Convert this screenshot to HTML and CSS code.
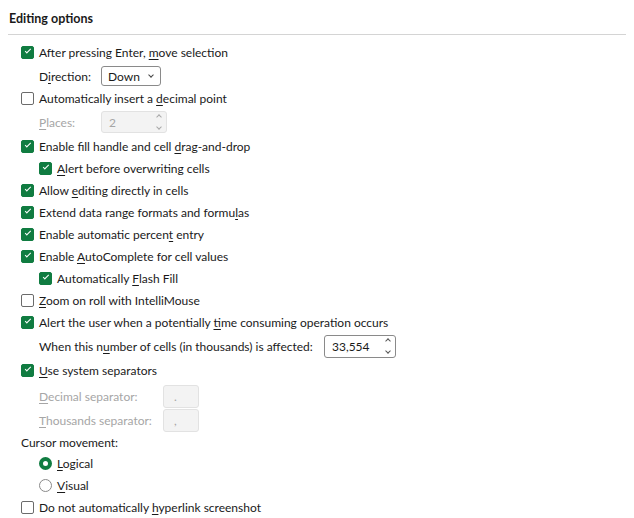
FILE: index.html
```html
<!DOCTYPE html>
<html>
<head>
<meta charset="utf-8">
<link rel="stylesheet" href="styles.css">
</head>
<body>
<div class="panel">
  <div class="heading">Editing options</div>
  <div class="rule"></div>
  <div class="rows">
    <div class="row"><span class="cb on"></span><span>After pressing Enter, <u>m</u>ove selection</span></div>
    <div class="row ind mt2"><span class="lbl dir">D<u>i</u>rection:</span><span class="select">Down<span class="chev"></span></span></div>
    <div class="row"><span class="cb"></span><span>Automatically insert a <u>d</u>ecimal point</span></div>
    <div class="row ind mt2 dis"><span class="lbl places"><u>P</u>laces:</span><span class="spin off w66"><span class="val">2</span><span class="arrows"><span class="up"></span><span class="dn"></span></span></span></div>
    <div class="row mt2"><span class="cb on"></span><span>Enable fill handle and cell <u>d</u>rag-and-drop</span></div>
    <div class="row ind"><span class="cb on"></span><span><u>A</u>lert before overwriting cells</span></div>
    <div class="row"><span class="cb on"></span><span>Allow <u>e</u>diting directly in cells</span></div>
    <div class="row"><span class="cb on"></span><span>Extend data range formats and formu<u>l</u>as</span></div>
    <div class="row"><span class="cb on"></span><span>Enable automatic percen<u>t</u> entry</span></div>
    <div class="row"><span class="cb on"></span><span>Enable <u>A</u>utoComplete for cell values</span></div>
    <div class="row ind"><span class="cb on"></span><span>Automatically <u>F</u>lash Fill</span></div>
    <div class="row"><span class="cb"></span><span><u>Z</u>oom on roll with IntelliMouse</span></div>
    <div class="row"><span class="cb on"></span><span>Alert the user when a potentially <u>t</u>ime consuming operation occurs</span></div>
    <div class="row ind mt2"><span class="lbl cells">When this n<u>u</u>mber of cells (in thousands) is affected:</span><span class="spin w72"><span class="val">33,554</span><span class="arrows"><span class="up"></span><span class="dn"></span></span></span></div>
    <div class="row mt2"><span class="cb on"></span><span><u>U</u>se system separators</span></div>
    <div class="row ind mt4 dis"><span class="lbl sep"><u>D</u>ecimal separator:</span><span class="sbox">.</span></div>
    <div class="row ind mt2 dis"><span class="lbl sep"><u>T</u>housands separator:</span><span class="sbox">,</span></div>
    <div class="row plain"><span>Cursor movement:</span></div>
    <div class="row ind mtm1"><span class="radio on"></span><span><u>L</u>ogical</span></div>
    <div class="row ind"><span class="radio"></span><span><u>V</u>isual</span></div>
    <div class="row"><span class="cb"></span><span>Do not automatically <u>h</u>yperlink screenshot</span></div>
  </div>
</div>
</body>
</html>
```
FILE: styles.css
```css
html, body {
  margin: 0;
  padding: 0;
  background: #ffffff;
}
body {
  font-family: "Lato", "Noto Sans", sans-serif;
  font-size: 12px;
  color: #1a1a1a;
}
.panel {
  padding: 10px 8px 0 8px;
}
.heading {
  font-weight: bold;
  font-size: 12.5px;
  height: 17px;
  line-height: 17px;
  padding-left: 1px;
  color: #1a1a1a;
}
.rule {
  height: 1px;
  background: #d4d4d4;
  margin-top: 7px;
  width: 618px;
}
.rows {
  display: flex;
  flex-direction: column;
  margin-top: 6px;
  padding-left: 13px;
}
.row {
  display: flex;
  align-items: center;
  height: 22px;
  white-space: nowrap;
}
.row.ind { padding-left: 18px; }
.row.plain { padding-left: 0; }
.mt2 { margin-top: 2px; }
.mt4 { margin-top: 4px; }
.mtm1 { margin-top: -1px; }
u {
  text-decoration-thickness: 1px;
  text-underline-offset: 2px;
}
.cb {
  width: 11px;
  height: 11px;
  border: 1px solid #6b6b6b;
  border-radius: 2px;
  margin-right: 5px;
  flex: none;
  position: relative;
  box-sizing: content-box;
}
.cb.on {
  background: #107c41;
  border-color: #107c41;
}
.cb.on::after {
  content: "";
  position: absolute;
  left: 3px;
  top: 2.5px;
  width: 4.5px;
  height: 2px;
  border-left: 1.3px solid #fff;
  border-bottom: 1.3px solid #fff;
  transform: rotate(-45deg);
}
.radio {
  width: 11px;
  height: 11px;
  border: 1px solid #8a8a8a;
  border-radius: 50%;
  margin-right: 5px;
  flex: none;
  box-sizing: content-box;
}
.radio.on {
  width: 5px;
  height: 5px;
  border: 4px solid #107c41;
}
.lbl { display: inline-block; }
.lbl.dir { width: 62px; }
.lbl.places { width: 62px; }
.lbl.cells { width: 285px; }
.lbl.sep { width: 124px; }
.dis { color: #a6a6a6; }
.select {
  display: flex;
  align-items: center;
  justify-content: space-between;
  box-sizing: border-box;
  width: 60px;
  height: 20px;
  border: 1px solid #8a8a8a;
  border-radius: 3px;
  padding: 0 7px 0 6px;
  color: #1a1a1a;
}
.chev {
  width: 3px;
  height: 3px;
  border-right: 1px solid #444;
  border-bottom: 1px solid #444;
  transform: rotate(45deg);
  margin-top: -3px;
}
.spin {
  display: flex;
  align-items: center;
  justify-content: space-between;
  box-sizing: border-box;
  height: 22px;
  border: 1px solid #8a8a8a;
  border-radius: 3px;
  padding: 0 5px 0 7px;
  color: #1a1a1a;
}
.spin.w66 { width: 66px; }
.spin.w72 { width: 72px; height: 23px; }
.spin.off {
  background: #f3f3f3;
  border-color: #e2e2e2;
  color: #a6a6a6;
}
.arrows {
  display: flex;
  flex-direction: column;
  align-items: center;
  gap: 6px;
}
.up, .dn {
  width: 3px;
  height: 3px;
  border-left: 1px solid #555;
  border-top: 1px solid #555;
}
.up { transform: rotate(45deg); }
.dn { transform: rotate(-135deg); }
.spin.off .up, .spin.off .dn { border-color: #a8a8a8; }
.sbox {
  display: flex;
  align-items: center;
  box-sizing: border-box;
  width: 36px;
  height: 23px;
  background: #f3f3f3;
  border: 1px solid #e2e2e2;
  border-radius: 3px;
  padding-left: 10px;
  color: #a6a6a6;
}
```
